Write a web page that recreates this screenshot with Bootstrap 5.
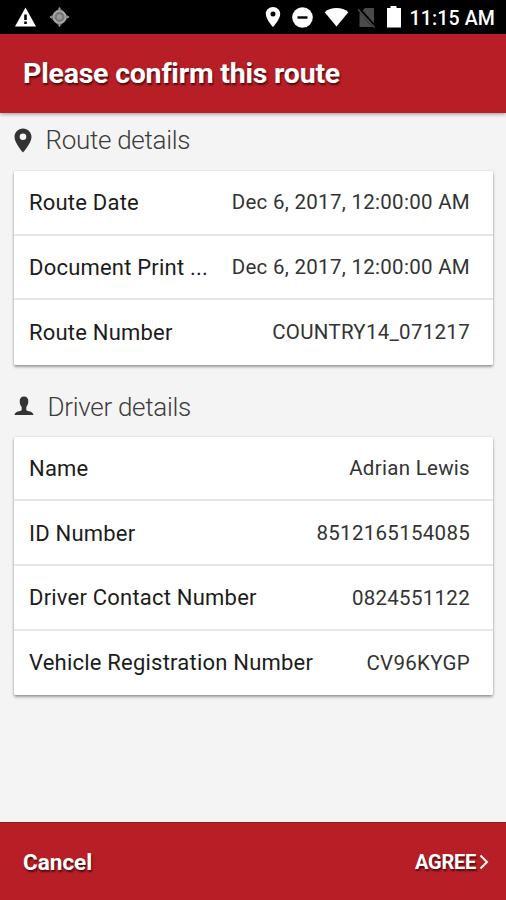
<!DOCTYPE html>
<html lang="en">
<head>
<meta charset="utf-8">
<meta name="viewport" content="width=device-width, initial-scale=1">
<title>Please confirm this route</title>
<link href="https://cdn.jsdelivr.net/npm/bootstrap@5.3.0/dist/css/bootstrap.min.css" rel="stylesheet">
<style>
body{font-family:Roboto,"Liberation Sans",sans-serif;background:#f4f4f4;height:900px;overflow:hidden;color:#1c1c1c}
svg{display:block;flex:none}
.status-bar{height:34px;background:#000;color:#fff;padding:0 11px 0 14px}
.clock{font-size:19.5px;font-weight:500;line-height:34px;padding-top:3px;margin-left:6px;letter-spacing:.16px}
.app-bar{height:79px;background:#b81e25;padding:0 23px;box-shadow:0 1px 4px rgba(0,0,0,.4);z-index:1}
.app-title{font-size:28.5px;font-weight:700;color:#fff;line-height:80px;letter-spacing:-.22px}
.app-title,.action{text-shadow:1px 1.5px 2px rgba(0,0,0,.6)}
.content{padding:0 13px 0 14px}
.section-title{font-size:26px;font-weight:300;line-height:32px;color:#3c3c3c;letter-spacing:-.3px}
.first-title{padding:11px 0 15px;height:58px}
.next-title{padding:25px 0 13px;height:72px}
.heading-text{margin-left:13.500px}
.panel{border:0;border-radius:2px;box-shadow:0 2px 3px rgba(0,0,0,.36),0 0 2px rgba(0,0,0,.16)}
.line{height:64.7px;padding:1px 23px 0 15px;border:0;border-bottom:2px solid #e6e6e6;font-size:22px;background:#fff}
.line:last-child{border-bottom:0;height:64.3px;padding-bottom:1px}
.key{letter-spacing:.21px;color:#1c1c1c}
.val{letter-spacing:.29px;font-size:20.5px;color:#333}
.action-bar{height:78px;background:#b81e25;border-top:1px solid #a81720;padding:0 17px 0 23px}
.action{color:#fff;font-weight:700;border:0;padding:0;line-height:30px}
.cancel{font-size:22.5px;padding-top:1px}
.agree{font-size:20px;letter-spacing:-.25px}
.chevron{margin-left:3px}
</style>
</head>
<body class="d-flex flex-column">
<div class="status-bar d-flex align-items-center justify-content-between">
  <div class="d-flex align-items-center">
    <svg width="24" height="22" viewBox="0 0 24 22"><path d="M11.500 1.500 22 20.500H1Z" fill="#fff"/><path d="M10.200 8.500h2.600v5.500h-2.600zM10.200 15.500h2.600V18h-2.600z" fill="#000"/></svg>
    <svg class="ms-2" width="26" height="22" viewBox="0 0 26 22"><path d="m13.500 1 3 3.500 3.500 3.500 3.500 3-3.500 3-3.500 3.500-3 3.500-3-3.500L7 14l-3.500-3L7 8l3.500-3.500Z" fill="#555"/><circle cx="13.500" cy="11" r="6" fill="#777" stroke="#aaa" stroke-width="1.800"/><path d="M13.500 1.500v4M13.500 16.500v4M4 11h4M19 11h4" stroke="#999" stroke-width="1.500"/><circle cx="13.500" cy="11" r="2.800" fill="#999"/></svg>
  </div>
  <div class="d-flex align-items-center">
    <svg width="16" height="22" viewBox="0 0 16 22"><path fill="#fff" fill-rule="evenodd" d="M8 1C4 1 .8 4 .8 8c0 5.200 7.200 13 7.200 13s7.200-7.800 7.200-13C15.200 4 12 1 8 1Zm0 4.600a2.500 2.500 0 1 1 0 5 2.500 2.500 0 0 1 0-5Z"/></svg>
    <svg class="ms-1" width="39" height="22" viewBox="0 0 39 22"><circle cx="17.500" cy="11.500" r="10.300" fill="#fff"/><path d="M12.500 11.500h10" stroke="#000" stroke-width="2.400"/></svg>
    <svg width="25" height="22" viewBox="0 0 26 22"><path fill="#fff" d="M13 21 .7 6C4 3 8.200 1.700 13 1.700S22 3 25.300 6Z"/></svg>
    <svg class="ms-2" width="20" height="22" viewBox="0 0 20 22"><path fill="#4a4a4a" d="M8 2h9v19H2.500V7.500Z"/><path d="m1 2 17 19" stroke="#000" stroke-width="3.500"/><path d="m1 3.500 16.500 18" stroke="#555" stroke-width="1.300"/></svg>
    <svg class="ms-2" width="18" height="22" viewBox="0 0 18 22"><path fill="#fff" d="M5.500 0h6v2H16v19.500H2V2h3.500Z"/></svg>
    <span class="clock">11:15 AM</span>
  </div>
</div>
<header class="app-bar position-relative"><h1 class="app-title m-0">Please confirm this route</h1></header>
<main class="content flex-grow-1">
  <h2 class="section-title first-title d-flex align-items-center m-0">
    <svg width="18" height="25" viewBox="0 0 18 25"><path fill="#333" fill-rule="evenodd" d="M9 .5C4.200.5.500 4.200.500 9 .500 15 9 24.500 9 24.500S17.500 15 17.500 9C17.500 4.200 13.800.500 9 .500Zm0 5a3.300 3.300 0 1 1 0 6.600 3.300 3.300 0 0 1 0-6.600Z"/></svg>
    <span class="heading-text">Route details</span>
  </h2>
  <div class="panel list-group">
    <div class="line list-group-item d-flex align-items-center justify-content-between"><span class="key">Route Date</span><span class="val">Dec 6, 2017, 12:00:00 AM</span></div>
    <div class="line list-group-item d-flex align-items-center justify-content-between"><span class="key">Document Print ...</span><span class="val">Dec 6, 2017, 12:00:00 AM</span></div>
    <div class="line list-group-item d-flex align-items-center justify-content-between"><span class="key">Route Number</span><span class="val">COUNTRY14_071217</span></div>
  </div>
  <h2 class="section-title next-title d-flex align-items-center m-0">
    <svg width="20" height="22" viewBox="0 0 20 22"><path fill="#333" d="M10 .5c3 0 4.500 2 4.300 5.200-.1 2.300-1 4-2 5.300v3c1 1.600 6.700 1 7.200 5H.5c.500-4 6.200-3.400 7.200-5v-3c-1-1.300-1.900-3-2-5.300C5.500 2.500 7 .5 10 .5Z"/></svg>
    <span class="heading-text">Driver details</span>
  </h2>
  <div class="panel list-group">
    <div class="line list-group-item d-flex align-items-center justify-content-between"><span class="key">Name</span><span class="val">Adrian Lewis</span></div>
    <div class="line list-group-item d-flex align-items-center justify-content-between"><span class="key">ID Number</span><span class="val">8512165154085</span></div>
    <div class="line list-group-item d-flex align-items-center justify-content-between"><span class="key">Driver Contact Number</span><span class="val">0824551122</span></div>
    <div class="line list-group-item d-flex align-items-center justify-content-between"><span class="key">Vehicle Registration Number</span><span class="val">CV96KYGP</span></div>
  </div>
</main>
<footer class="action-bar d-flex align-items-center justify-content-between">
  <button class="btn action cancel">Cancel</button>
  <button class="btn action agree d-flex align-items-center">AGREE
    <svg class="chevron" width="10" height="16" viewBox="0 0 10 16"><path d="m1.500 1.500 6.500 6.500-6.500 6.500" fill="none" stroke="#fff" stroke-width="2"/></svg>
  </button>
</footer>
<script src="https://cdn.jsdelivr.net/npm/bootstrap@5.3.0/dist/js/bootstrap.bundle.min.js"></script>
</body>
</html>
